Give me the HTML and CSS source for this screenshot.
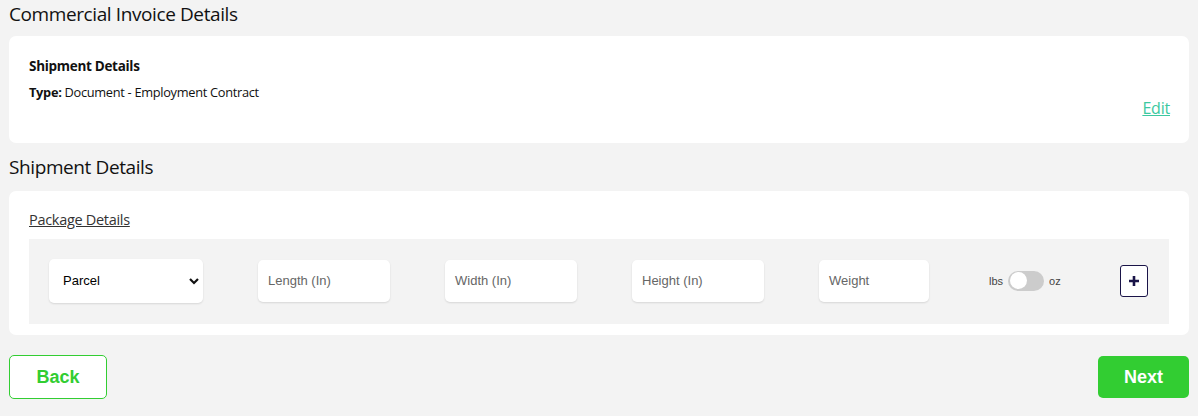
FILE: index.html
```html
<!DOCTYPE html>
<html lang="en">
<head>
    <meta charset="UTF-8">
    <meta name="viewport" content="width=device-width, initial-scale=1.0">
    <title>Commercial Invoice</title>
    <link rel="stylesheet" href="styles.css">
</head>
<body>
    <div class="page">
        <h2 class="section-title">Commercial Invoice Details</h2>
        <div class="card card-summary">
            <div class="summary-text">
                <div class="summary-head">Shipment Details</div>
                <div class="summary-line"><b>Type:</b> Document - Employment Contract</div>
            </div>
            <a href="#" class="edit-link">Edit</a>
        </div>

        <h2 class="section-title">Shipment Details</h2>
        <div class="card card-package">
            <a href="#" class="package-link">Package Details</a>
            <div class="package-row">
                <div class="field field-select">
                    <span>Parcel</span>
                    <svg width="12" height="8" viewBox="0 0 12 8"><path d="M2 2l4 4 4-4" fill="none" stroke="#111" stroke-width="2.2"/></svg>
                </div>
                <div class="field field-length">Length (In)</div>
                <div class="field field-width">Width (In)</div>
                <div class="field field-height">Height (In)</div>
                <div class="field field-weight">Weight</div>
                <div class="unit-toggle">
                    <span>lbs</span>
                    <span class="switch"><span class="knob"></span></span>
                    <span>oz</span>
                </div>
                <button class="add-btn">
                    <svg width="12" height="12" viewBox="0 0 12 12"><path d="M6 1v10M1 6h10" stroke="#1a1448" stroke-width="2.6"/></svg>
                </button>
            </div>
        </div>

        <div class="actions">
            <button class="btn btn-back">Back</button>
            <button class="btn btn-next">Next</button>
        </div>
    </div>
</body>
</html>
```

FILE: styles.css
```css
body {
    margin: 0;
    background-color: #f3f3f3;
    font-family: "Open Sans", "Noto Sans", sans-serif;
    color: #111;
}
.page {
    padding: 0 9px;
}
.section-title {
    margin: 0;
    font-size: 19px;
    font-weight: 400;
    letter-spacing: -0.4px;
    line-height: 28px;
}
.section-title:first-child {
    padding-bottom: 8px;
}
.card {
    background-color: #fff;
    border-radius: 7px;
}
.card-summary {
    display: flex;
    justify-content: space-between;
    align-items: flex-end;
    height: 107px;
    padding: 0 19px 0 20px;
    margin-bottom: 10px;
    box-sizing: border-box;
    padding-bottom: 24px;
}
.summary-text {
    align-self: flex-start;
    padding-top: 20px;
}
.summary-head {
    font-size: 13.5px;
    font-weight: 700;
    letter-spacing: -0.3px;
    line-height: 20px;
}
.summary-line {
    font-size: 12.8px;
    letter-spacing: -0.3px;
    line-height: 20px;
    margin-top: 6px;
}
.edit-link {
    color: #3cc8a0;
    font-size: 16px;
    letter-spacing: -0.2px;
}
.card-package {
    margin-top: 10px;
    padding: 17px 20px 11px 20px;
}
.package-link {
    display: inline-block;
    color: #333;
    font-size: 14.5px;
    letter-spacing: -0.3px;
    line-height: 20px;
    margin-bottom: 9px;
}
.package-row {
    display: flex;
    align-items: center;
    background-color: #f3f3f3;
    height: 85px;
    padding: 0 20px 2px 20px;
    box-sizing: border-box;
    font-family: "Liberation Sans", Arial, sans-serif;
    font-size: 13px;
}
.field {
    display: flex;
    align-items: center;
    justify-content: space-between;
    height: 42px;
    padding: 0 10px;
    box-sizing: border-box;
    background-color: #fff;
    border-radius: 5px;
    box-shadow: 0 1px 2px rgba(0, 0, 0, 0.12);
    color: #666;
    margin-right: 55px;
}
.field-select {
    width: 154px;
    height: 44px;
    color: #000;
    padding: 0 3px 0 14px;
}
.field-length { width: 132px; }
.field-width { width: 132px; }
.field-height { width: 132px; }
.field-weight { width: 110px; margin-right: 60px; }
.unit-toggle {
    display: flex;
    align-items: center;
    gap: 5px;
    font-size: 11px;
    color: #444;
}
.switch {
    width: 36px;
    height: 20px;
    border-radius: 10px;
    background-color: #ccc;
    display: flex;
    align-items: center;
    padding-left: 2px;
    box-sizing: border-box;
}
.knob {
    width: 17px;
    height: 17px;
    border-radius: 50%;
    background-color: #fff;
}
.add-btn {
    margin-left: auto;
    margin-right: 1px;
    width: 28px;
    height: 32px;
    padding: 0;
    border: 1px solid #1a1448;
    border-radius: 3px;
    background-color: #fff;
    display: flex;
    align-items: center;
    justify-content: center;
}
.actions {
    display: flex;
    justify-content: space-between;
    align-items: center;
    margin-top: 20px;
}
.btn {
    font-family: "Liberation Sans", Arial, sans-serif;
    font-size: 18px;
    font-weight: 700;
    border-radius: 5px;
    cursor: pointer;
}
.btn-back {
    width: 98px;
    height: 44px;
    background-color: #fff;
    color: #32cd32;
    border: 1px solid #32cd32;
}
.btn-next {
    width: 91px;
    height: 42px;
    background-color: #32cd32;
    color: #fff;
    border: none;
}
```
